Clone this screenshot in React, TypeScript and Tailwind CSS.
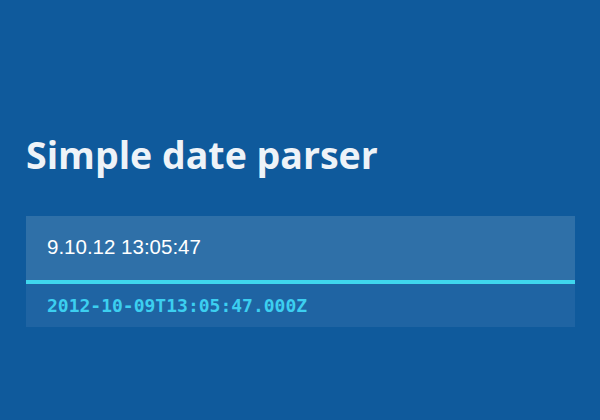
import React from 'react';

export default function App() {
  return (
    <div className="w-[600px] h-[420px] bg-[#0f5a9c] pl-[26px] pr-[25px] pt-[127px] overflow-hidden">
      <h1 className="text-[37.5px] leading-[56px] font-bold text-[#eef3f8] font-['Open_Sans',sans-serif]">
        Simple date parser
      </h1>
      <div className="mt-[33px] flex flex-col">
        <div className="h-[68px] bg-[#2f70a8] border-b-[4px] border-[#3fd6ee] flex items-center px-[21px] pb-[2px]">
          <span className="text-[20.5px] text-white font-['Liberation_Sans',Arial,sans-serif]">9.10.12 13:05:47</span>
        </div>
        <div className="h-[43px] bg-[#1f64a3] flex items-center px-[21px]">
          <span className="text-[18px] font-bold text-[#3ccff0] font-['DejaVu_Sans_Mono',monospace]">2012-10-09T13:05:47.000Z</span>
        </div>
      </div>
    </div>
  );
}
